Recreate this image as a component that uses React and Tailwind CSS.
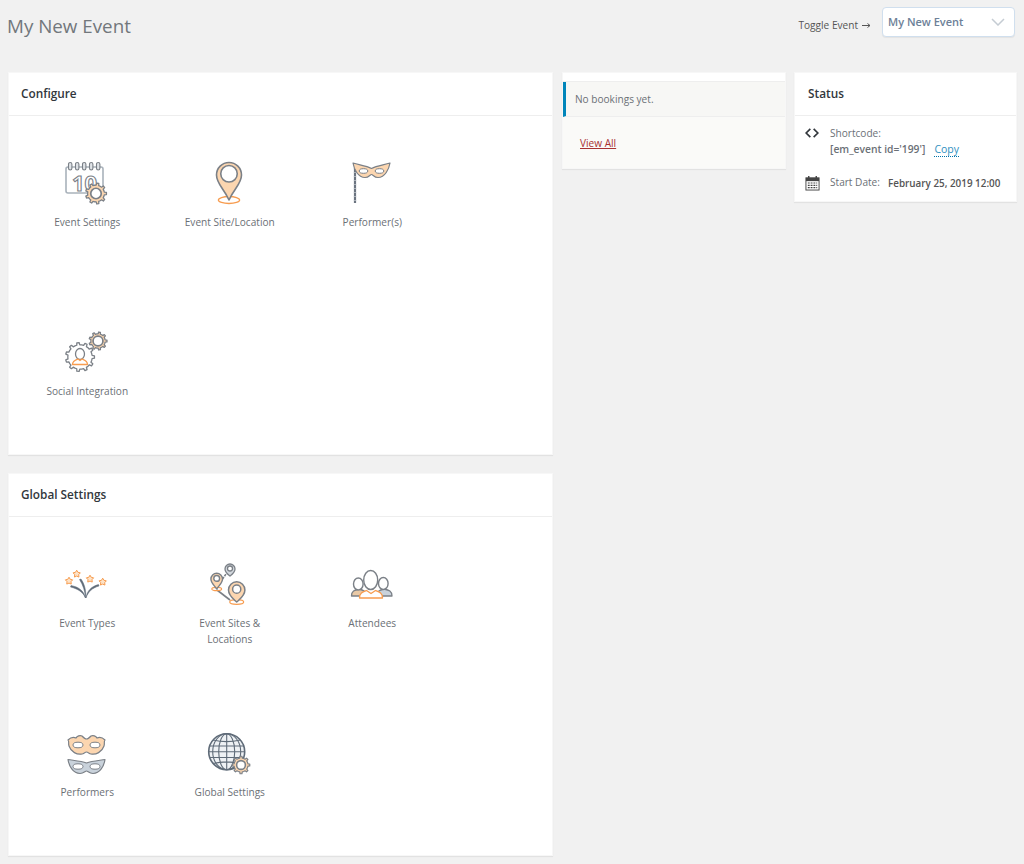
const gray = '#7b8087';
const slate = '#5f6b78';
const peach = '#fcd6b0';
const orange = '#f79c4f';
const steel = '#c9d2db';

// gear outline built from teeth around a centre
function gearPoints(cx, cy, r, teeth = 8, depth = 0.8) {
  const pts = [];
  const inner = r * depth;
  const step = (Math.PI * 2) / teeth;
  for (let i = 0; i < teeth; i++) {
    const a = i * step;
    [[-0.5, inner], [-0.22, inner], [-0.14, r], [0.14, r], [0.22, inner], [0.5, inner]].forEach(([k, rad]) => {
      pts.push(`${(cx + Math.cos(a + k * step) * rad).toFixed(2)},${(cy + Math.sin(a + k * step) * rad).toFixed(2)}`);
    });
  }
  return pts.join(' ');
}

function Gear({ cx, cy, r, teeth = 8, fill = peach, stroke = gray, sw = 1.3, hole = 0.5 }) {
  return (
    <g>
      <polygon points={gearPoints(cx, cy, r, teeth)} fill={fill} stroke={stroke} strokeWidth={sw} strokeLinejoin="round" />
      <circle cx={cx} cy={cy} r={r * hole} fill="#fff" stroke={stroke} strokeWidth={sw * 1.3} />
    </g>
  );
}

function Pin({ cx, cy, r, tip, fill = peach, hole = 0.62, sw = 1.4, base = true }) {
  return (
    <g>
      {base && <ellipse cx={cx} cy={tip} rx={r * 0.85} ry={r * 0.28} fill="none" stroke={orange} strokeWidth={sw * 0.8} />}
      <path
        d={`M${cx} ${tip} C${cx - r * 0.4} ${cy + r * 1.1} ${cx - r} ${cy + r * 0.7} ${cx - r} ${cy} A${r} ${r} 0 0 1 ${cx + r} ${cy} C${cx + r} ${cy + r * 0.7} ${cx + r * 0.4} ${cy + r * 1.1} ${cx} ${tip}Z`}
        fill={fill}
        stroke={gray}
        strokeWidth={sw}
        strokeLinejoin="round"
      />
      <circle cx={cx} cy={cy - r * 0.1} r={r * hole} fill="#fff" stroke={gray} strokeWidth={sw} />
    </g>
  );
}

function Star({ x, y, r = 3.8 }) {
  const pts = [];
  for (let i = 0; i < 10; i++) {
    const a = -Math.PI / 2 + (i * Math.PI) / 5;
    const rad = i % 2 ? r * 0.55 : r;
    pts.push(`${(x + Math.cos(a) * rad).toFixed(2)},${(y + Math.sin(a) * rad).toFixed(2)}`);
  }
  return <polygon points={pts.join(' ')} fill="#fde3c8" stroke={orange} strokeWidth="1" strokeLinejoin="round" />;
}

function Svg({ children }) {
  return (
    <svg viewBox="0 0 48 48" className="h-12 w-12" fill="none">
      {children}
    </svg>
  );
}

function CalendarGear() {
  return (
    <Svg>
      <rect x="3" y="9" width="37" height="26" rx="2" fill="#fff" stroke="#a9b2bb" strokeWidth="1.6" />
      {[5.5, 12.5, 19.5, 26.5, 33.5].map((x) => (
        <rect key={x} x={x} y="4.500" width="3.400" height="7.500" rx="1.700" fill="#dfe3e7" stroke={gray} strokeWidth="1.100" />
      ))}
      <text x="9" y="33" fontFamily="Open Sans, sans-serif" fontSize="22" fontWeight="700" fill="#fff" stroke={gray} strokeWidth="1.100">10</text>
      <Gear cx={33} cy={35.5} r={10.5} teeth={9} />
    </Svg>
  );
}

function MapPin() {
  return (
    <Svg>
      <Pin cx={23} cy={17} r={12.5} tip={42} hole={0.66} sw={1.6} />
    </Svg>
  );
}

function MaskStick() {
  return (
    <Svg>
      <path d="M7 10v35" stroke="#6b7480" strokeWidth="2.200" />
      <path d="M7 10v35" stroke="#aab1b8" strokeWidth="2.200" strokeDasharray="1 3" />
      <path
        d="M5 5C11 7 18 7.500 23.500 10.500 29 7.500 36 7 42 5 41 11 37 19.500 30 19.500 26 19.500 25 16.500 23.500 16.500 22 16.500 21 19.500 17 19.500 10 19.500 6 11 5 5Z"
        fill={peach}
        stroke={gray}
        strokeWidth="1.200"
        strokeLinejoin="round"
      />
      <ellipse cx="15.500" cy="13" rx="4.300" ry="2.300" fill="#fff" stroke={gray} />
      <ellipse cx="31.500" cy="13" rx="4.300" ry="2.300" fill="#fff" stroke={gray} />
    </Svg>
  );
}

function SocialGear() {
  return (
    <Svg>
      <Gear cx={35} cy={14} r={9} teeth={9} hole={0.55} />
      <polygon points={gearPoints(17, 30, 14.5, 11, 0.84)} fill="#fff" stroke={gray} strokeWidth="1.300" strokeLinejoin="round" />
      <ellipse cx="17" cy="27" rx="4.500" ry="5.500" fill="#fff" stroke={gray} strokeWidth="1.300" />
      <path d="M9.500 37.500c0-3.500 3-4.500 5.500-5.500l2 1.500 2-1.500c2.500 1 5.500 2 5.500 5.500z" fill="#fff" stroke={orange} strokeWidth="1.300" strokeLinejoin="round" />
    </Svg>
  );
}

function Fireworks() {
  return (
    <Svg>
      <path d="M22.500 39C20 33 15 30 7.500 28L8 26.500C16 28 21 32 22.500 39Z" fill={slate} stroke={slate} strokeWidth=".5" />
      <path d="M22.500 39C22 32 20 26 16.500 20.500L18 20C21.500 25 23.500 32 22.500 39Z" fill={slate} stroke={slate} strokeWidth=".5" />
      <path d="M23 39C25 33 29 29 36 27L35.500 25.500C28 27.500 24 32 23 39Z" fill={slate} stroke={slate} strokeWidth=".5" />
      <Star x={6} y={22} />
      <Star x={13.700} y={15} />
      <Star x={27} y={20} />
      <Star x={39.700} y={23} />
    </Svg>
  );
}

function SitesPins() {
  return (
    <Svg>
      <path d="M14.500 23 20 15" stroke={gray} strokeWidth="1.600" strokeDasharray="2.500 1" />
      <path d="M11 31 24 41" stroke={gray} strokeWidth="1.600" />
      <Pin cx={24} cy={10} r={5} tip={17} fill="#d3d8de" base={false} sw={1.300} hole={0.5} />
      <Pin cx={10.700} cy={20} r={5.800} tip={30} sw={1.400} hole={0.5} />
      <Pin cx={30.700} cy={31} r={8.200} tip={43} sw={1.500} hole={0.5} />
    </Svg>
  );
}

function People() {
  return (
    <Svg>
      <path d="M3.500 37c0-5 3-6 7.500-7 4 1 7 2 8 7z" fill="#e9c9a6" stroke={gray} strokeWidth="1.300" strokeLinejoin="round" />
      <path d="M28 37c1-5 4-6 8-7 5 1 8 2 8 7z" fill={steel} stroke={gray} strokeWidth="1.300" strokeLinejoin="round" />
      <ellipse cx="10.300" cy="25" rx="4.800" ry="6" fill="#fff" stroke={gray} strokeWidth="1.400" />
      <ellipse cx="35.300" cy="24.500" rx="4.800" ry="6" fill="#fff" stroke={gray} strokeWidth="1.400" />
      <path d="M11.500 39c0-5 3-6 7-7.500l4.500 3 4.500-3c4 1.500 7 2.500 7 7.500z" fill="#fff" stroke={orange} strokeWidth="1.300" strokeLinejoin="round" />
      <ellipse cx="22.700" cy="21" rx="7" ry="9.500" fill="#fff" stroke={gray} strokeWidth="1.400" />
    </Svg>
  );
}

function TwoMasks() {
  return (
    <Svg>
      <path
        d="M5 12C8 9 11 9 13 10 14 8 17 7 19 8 20 9 22 11 23.500 11 25 11 27 9 28 8 30 7 33 8 34 10 36 9 39 9 42 12 40.500 14 42 15 41 18 39 24 33 27 28 26 26 25.500 25 24 23.500 24 22 24 21 25.500 19 26 14 27 8 24 6 18 5 15 6.500 14 5 12Z"
        fill={peach}
        stroke={gray}
        strokeWidth="1.200"
        strokeLinejoin="round"
      />
      <ellipse cx="15" cy="17" rx="5" ry="2.800" fill="#fff" stroke={gray} />
      <ellipse cx="32" cy="17" rx="5" ry="2.800" fill="#fff" stroke={gray} />
      <path
        d="M5 31.500C11 32.500 18 33 23.500 35 29 33 36 32.500 42 31.500 41 38 37 45.500 30 45.500 26 45.500 25 43 23.500 43 22 43 21 45.500 17 45.500 10 45.500 6 38 5 31.500Z"
        fill={steel}
        stroke={gray}
        strokeWidth="1.200"
        strokeLinejoin="round"
      />
      <ellipse cx="15" cy="38.500" rx="5" ry="2.700" fill="#fff" stroke={gray} />
      <ellipse cx="32" cy="38.500" rx="5" ry="2.700" fill="#fff" stroke={gray} />
    </Svg>
  );
}

function GlobeGear() {
  return (
    <Svg>
      <circle cx="20.700" cy="23.700" r="18" fill="#eef1f4" stroke={slate} strokeWidth="1.600" />
      <g stroke={slate} strokeWidth="1.100" fill="none">
        <ellipse cx="20.700" cy="23.700" rx="8" ry="18" />
        <ellipse cx="20.700" cy="23.700" rx="14" ry="18" />
        <path d="M20.700 5.700v36M3.500 18h34.400M3.500 29.500h34.400M7 12c8 2 19 2 27.400 0M7 35.500c8-2 19-2 27.400 0M2.700 23.700h36" />
      </g>
      <Gear cx={35} cy={37} r={8.800} teeth={8} hole={0.5} sw={1.200} />
    </Svg>
  );
}

function Tile({ icon, children }) {
  return (
    <div className="flex h-[169px] flex-col items-center pt-[42px] text-center">
      {icon}
      <span className="mt-2 block w-[100px] text-[10.1px] leading-4 text-[#6b7076]">{children}</span>
    </div>
  );
}

function TileCard({ title, children }) {
  return (
    <section className="border border-[#f7f7f7] bg-white shadow-[0_1px_1px_rgba(0,0,0,0.06)]">
      <h2 className="flex h-[43px] items-center border-b border-[#eeeeee] px-[12px] text-[11.8px] font-semibold text-[#32373c]">{title}</h2>
      <div className="grid grid-cols-[repeat(3,142.5px)] px-[7px]">{children}</div>
    </section>
  );
}

export default function App() {
  return (
    <div className="min-h-[864px] bg-[#f1f1f1] font-['Open_Sans',sans-serif]">
      <header className="flex h-[72px] items-start justify-between pl-[7px] pr-[9px]">
        <h1 className="mt-[12px] text-[18.8px] leading-[28px] text-[#72777c]">My New Event</h1>
        <div className="mt-[7px] flex items-center">
          <span className="mt-[8px] mr-[11px] flex items-center text-[10.1px] text-[#555]">
            Toggle Event
            <svg viewBox="0 0 9 7" className="ml-1 h-[7px] w-[9px]" fill="none">
              <path d="M0 3.500h8M5.500 1.500l2.500 2-2.500 2" stroke="#555" />
            </svg>
          </span>
          <div className="flex h-[30px] w-[133px] items-center justify-between rounded border border-[#d0dfee] bg-white pl-[5px] pr-[9px] shadow-[0_1px_1px_rgba(0,0,0,0.06)]">
            <span className="text-[11px] font-semibold text-[#6d8198]">My New Event</span>
            <svg viewBox="0 0 14 8" className="h-2 w-[14px]" fill="none">
              <path d="M1 1l6 6 6-6" stroke="#c5ccd3" strokeWidth="1.500" />
            </svg>
          </div>
        </div>
      </header>

      <main className="flex items-start pl-2">
        <div className="flex w-[545px] flex-col gap-[18px]">
          <TileCard title="Configure">
            <Tile icon={<CalendarGear />}>Event Settings</Tile>
            <Tile icon={<MapPin />}>Event Site/Location</Tile>
            <Tile icon={<MaskStick />}>Performer(s)</Tile>
            <Tile icon={<SocialGear />}>Social Integration</Tile>
          </TileCard>
          <TileCard title="Global Settings">
            <Tile icon={<Fireworks />}>Event Types</Tile>
            <Tile icon={<SitesPins />}>Event Sites &amp; Locations</Tile>
            <Tile icon={<People />}>Attendees</Tile>
            <Tile icon={<TwoMasks />}>Performers</Tile>
            <Tile icon={<GlobeGear />}>Global Settings</Tile>
          </TileCard>
        </div>

        <section className="ml-[9px] w-[224px] border border-[#f7f7f7] bg-white shadow-[0_1px_1px_rgba(0,0,0,0.06)]">
          <div className="h-[9px] border-b border-[#eeeeee]" />
          <div className="flex h-[35px] items-center border-b border-[#eeeeee] border-l-[3px] border-l-[#0085ba] bg-[#f7f7f5] pl-[9px] pt-[2px] text-[10.1px] text-[#6b7076]">
            No bookings yet.
          </div>
          <div className="h-[51px] bg-[#fafaf8] pl-[17px] pt-[18px]">
            <a className="block text-[10.1px] leading-4 text-[#a83232] underline">View All</a>
          </div>
        </section>

        <section className="ml-[8px] w-[223px] border border-[#f7f7f7] bg-white shadow-[0_1px_1px_rgba(0,0,0,0.06)]">
          <h2 className="flex h-[43px] items-center border-b border-[#eeeeee] px-[13px] text-[11.8px] font-semibold text-[#32373c]">Status</h2>
          <div className="flex items-start pl-[10px] pt-[9px]">
            <svg viewBox="0 0 16 12" className="mt-[3px] h-[10px] w-[14px]" fill="none">
              <path d="M6 1 1 6l5 5M10 1l5 5-5 5" stroke="#32373c" strokeWidth="2" />
            </svg>
            <div className="ml-[11px] text-[10.1px] leading-4 text-[#6b7076]">
              <div>Shortcode:</div>
              <div>
                <span className="text-[10.3px] font-semibold">[em_event id='199']</span>
                <a className="ml-[9px] border-b border-dotted border-[#0073aa] text-[10.5px] text-[#2f8fc0]">Copy</a>
              </div>
            </div>
          </div>
          <div className="flex items-center pb-[10px] pl-[10px] pt-[18px]">
            <svg viewBox="0 0 16 16" className="h-4 w-[15px]" fill="none">
              <rect x="1" y="2.500" width="14" height="13" fill="#fff" stroke="#444" />
              <rect x="1" y="2.500" width="14" height="3.500" fill="#444" />
              <path d="M4 .5v3M12 .5v3" stroke="#444" strokeWidth="1.500" />
              <path d="M3 8h10M3 10.500h10M3 13h10" stroke="#444" strokeWidth="1.300" strokeDasharray="2 1" />
            </svg>
            <span className="ml-[10px] text-[10.1px] text-[#6b7076]">Start Date:</span>
            <span className="ml-[8px] text-[9.9px] font-semibold text-[#555]">February 25, 2019 12:00</span>
          </div>
        </section>
      </main>
    </div>
  );
}
